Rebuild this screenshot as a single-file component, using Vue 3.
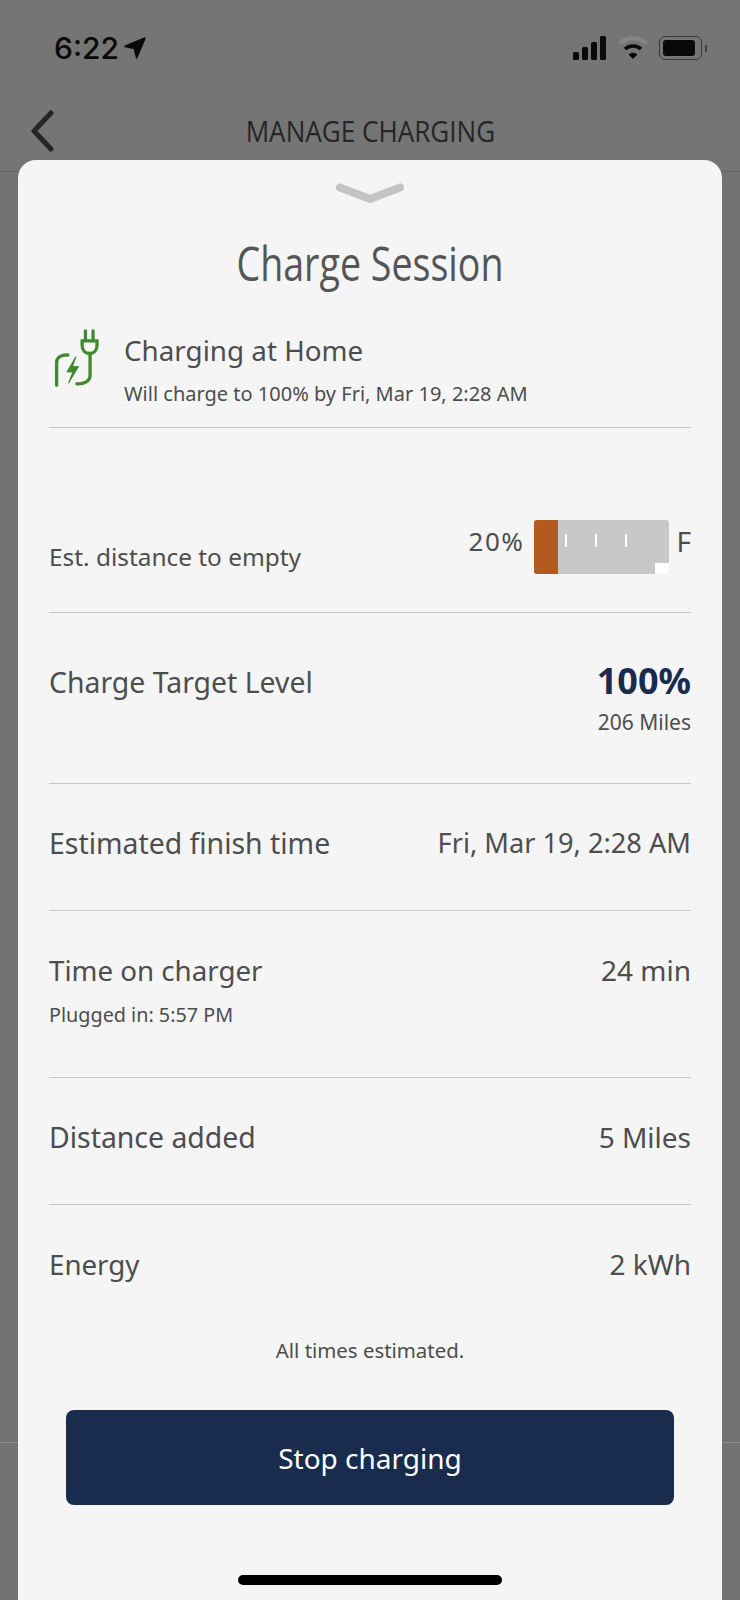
<template>
  <div class="screen">
    <div class="status-bar">
      <div class="clock">
        <span>6:22</span>
        <svg class="loc" viewBox="0 0 20 20"><path d="M19 1 1 8.500l8.500 2 2 8.500z" fill="#0a0a0a" stroke="#0a0a0a" stroke-width="1.500" stroke-linejoin="round" /></svg>
      </div>
      <div class="status-icons">
        <svg width="34" height="24" viewBox="0 0 34 24">
          <rect x="0" y="16" width="6" height="8" rx="1.5" />
          <rect x="9" y="11" width="6" height="13" rx="1.5" />
          <rect x="18" y="6" width="6" height="18" rx="1.5" />
          <rect x="27" y="0" width="6" height="24" rx="1.5" />
        </svg>
        <svg class="wifi" width="30" height="24" viewBox="0 0 30 24">
          <path d="M1.500 7.500c7.500-7 19.500-7 27 0" fill="none" stroke="#868686" stroke-width="4" />
          <path d="M7 13c4.500-4 11.500-4 16 0" fill="none" stroke="#0a0a0a" stroke-width="3.500" />
          <path d="M15 23l-4.500-4.500c2.500-2.200 6.500-2.200 9 0z" fill="#0a0a0a" />
        </svg>
        <div class="battery"><div class="battery-fill"></div></div>
        <div class="battery-tip"></div>
      </div>
    </div>

    <header class="nav">
      <svg class="back" width="26" height="42" viewBox="0 0 26 42">
        <path d="M22 3 5 21l17 18" fill="none" stroke="#262626" stroke-width="5" stroke-linecap="round" stroke-linejoin="round" />
      </svg>
      <h1>MANAGE CHARGING</h1>
    </header>

    <div class="under"></div>

    <section class="sheet">
      <svg class="handle" width="68" height="21" viewBox="0 0 68 21">
        <path d="M4 4.500 34 16 64 4.500" fill="none" stroke="#c4c4c4" stroke-width="8" stroke-linecap="round" stroke-linejoin="round" />
      </svg>
      <h2 class="title">Charge Session</h2>

      <div class="session">
        <svg class="plug" width="48" height="60" viewBox="70 20 145 180" fill="none" stroke="#3f8a2e" stroke-width="10">
          <path d="M168 28v28M191 28v28" stroke-width="10" stroke-linecap="round" />
          <path d="M158 58h45v14c0 15-10 24-22.500 24S158 87 158 72z" />
          <path d="M182 96v66c0 18-18 27-40 26" stroke-linecap="round" />
          <path d="M81 192v-70c0-14 14-22 34-21" stroke-linecap="round" />
          <path d="M139 106l-27 46h18l-13 34 30-50h-18z" fill="#3f8a2e" stroke-width="3" stroke-linejoin="round" />
        </svg>
        <div>
          <div class="session-name">Charging at Home</div>
          <div class="session-sub">Will charge to 100% by Fri, Mar 19, 2:28 AM</div>
        </div>
      </div>

      <div class="row row-level">
        <span class="label">Est. distance to empty</span>
        <div class="level">
          <span class="level-pct">20%</span>
          <div class="gauge">
            <div class="gauge-fill"></div>
            <i class="tick" v-for="x in ticks" :key="x" :style="{ left: x + 'px' }"></i>
            <div class="gauge-notch"></div>
          </div>
          <span class="level-full">F</span>
        </div>
      </div>

      <div class="row row-target">
        <span class="label">Charge Target Level</span>
        <div class="target">
          <strong>100%</strong>
          <small>206 Miles</small>
        </div>
      </div>

      <div class="row row-short">
        <span class="label">Estimated finish time</span>
        <span class="value value-date">Fri, Mar 19, 2:28 AM</span>
      </div>

      <div class="row row-time">
        <div>
          <div class="label label-tight">Time on charger</div>
          <div class="plugged">Plugged in: 5:57 PM</div>
        </div>
        <span class="value">24 min</span>
      </div>

      <div class="row row-short">
        <span class="label">Distance added</span>
        <span class="value">5 Miles</span>
      </div>

      <div class="row row-last">
        <span class="label label-tight">Energy</span>
        <span class="value">2 kWh</span>
      </div>

      <p class="note">All times estimated.</p>
      <button type="button" class="stop">Stop charging</button>
      <div class="home-bar"></div>
    </section>
  </div>
</template>

<script setup>
const ticks = [31, 61, 91]
</script>

<style>
html,
body {
  margin: 0;
  background: #727272;
}
</style>

<style scoped>
.screen {
  position: relative;
  width: 740px;
  height: 1600px;
  overflow: hidden;
  background: #727272;
  font-family: "Noto Sans", "Open Sans", sans-serif;
  color: #4d4d4d;
}

.status-bar {
  height: 96px;
  box-sizing: border-box;
  padding: 30px 33px 0 54px;
  display: flex;
  justify-content: space-between;
  align-items: flex-start;
  background: #757575;
}

.clock {
  display: flex;
  align-items: center;
  gap: 5px;
  font: 500 30px/36px Inter, sans-serif;
  color: #0a0a0a;
}

.loc {
  width: 22px;
  height: 22px;
}

.status-icons {
  display: flex;
  align-items: center;
  gap: 11px;
  height: 36px;
  fill: #0a0a0a;
}

.battery {
  width: 43px;
  height: 24px;
  box-sizing: border-box;
  margin-left: 0;
  padding: 3px;
  border: 1.500px solid #3a3a3a;
  border-radius: 6px;
}

.battery-fill {
  width: 32px;
  height: 100%;
  border-radius: 3px;
  background: #0a0a0a;
}

.battery-tip {
  width: 2px;
  height: 7px;
  margin-left: -8px;
  background: #444;
}

.nav {
  height: 76px;
  box-sizing: border-box;
  display: flex;
  align-items: center;
  justify-content: center;
  position: relative;
  background: #757575;
  border-bottom: 1px solid #666;
}

.back {
  position: absolute;
  left: 29px;
  top: 14px;
}

.nav h1 {
  margin: 0 0 6px;
  font: 500 30px/36px "Open Sans", sans-serif;
  color: #262626;
  transform: scaleX(0.87);
  white-space: nowrap;
}

.under {
  height: 1270px;
  border-bottom: 1px solid #8c8c8c;
}

.sheet {
  position: absolute;
  left: 18px;
  top: 160px;
  width: 704px;
  height: 1440px;
  box-sizing: border-box;
  padding: 23px 31px 0;
  background: #f5f5f5;
  border-radius: 18px 18px 0 0;
  display: flex;
  flex-direction: column;
}

.handle {
  align-self: center;
  flex: none;
}

.title {
  margin: 20px 0 0;
  height: 78px;
  text-align: center;
  font: 400 47px/78px "Open Sans", sans-serif;
  color: #555;
  transform: scaleX(0.8);
  white-space: nowrap;
}

.session {
  height: 126px;
  box-sizing: border-box;
  padding: 24px 0 0 4px;
  display: flex;
  align-items: flex-start;
  gap: 23px;
  border-bottom: 1.500px solid #c9c9c9;
}

.plug {
  margin-top: 2px;
  flex: none;
}

.session-name {
  font-size: 27.800px;
  line-height: 44px;
  margin-top: 2px;
}

.session-sub {
  font-size: 20px;
  line-height: 44px;
}

.row {
  display: flex;
  justify-content: space-between;
  box-sizing: border-box;
  border-bottom: 1.500px solid #c9c9c9;
}

.label,
.value {
  font-size: 28px;
  line-height: 40px;
  white-space: nowrap;
}

.label {
  font-size: 28.400px;
}

.label-tight {
  font-size: 27.700px;
}

.value-date {
  font-size: 27.200px;
}

.row-level {
  height: 185px;
  padding-top: 109px;
}

.row-level .label {
  font-size: 24.400px;
}

.level {
  margin-top: -17px;
  height: 54px;
  display: flex;
  align-items: flex-start;
  gap: 10px;
}

.level-pct {
  font-size: 26px;
  line-height: 43px;
  letter-spacing: 1.500px;
}

.level-full {
  font-size: 28px;
  line-height: 43px;
  margin-left: -3px;
}

.gauge {
  position: relative;
  width: 135px;
  height: 54px;
  border-radius: 3px;
  background: #c8c8c8;
  overflow: hidden;
}

.gauge-fill {
  width: 24px;
  height: 100%;
  background: #b55a1e;
}

.tick {
  position: absolute;
  top: 14px;
  width: 2px;
  height: 13px;
  background: #fff;
}

.gauge-notch {
  position: absolute;
  right: 0;
  bottom: 0;
  width: 14px;
  height: 11px;
  background: #fff;
}

.row-target {
  height: 171px;
  padding-top: 49px;
}

.target {
  text-align: right;
  margin-top: -3px;
}

.target strong {
  display: block;
  font-size: 36px;
  line-height: 44px;
  font-weight: 700;
  color: #1a2c4e;
}

.target small {
  display: block;
  margin-top: 1px;
  font-size: 21px;
  line-height: 36px;
}

.row-short {
  height: 127px;
  padding-top: 39px;
}

.row-time {
  height: 167px;
  padding-top: 39px;
}

.plugged {
  font-size: 19.800px;
  line-height: 36px;
  margin-top: 7px;
}

.row-last {
  border-bottom: 0;
  height: 105px;
  padding-top: 39px;
}

.note {
  margin: 20px 0 0;
  text-align: center;
  font-size: 20.400px;
  line-height: 40px;
}

.stop {
  flex: none;
  align-self: center;
  margin-top: 40px;
  padding-top: 2px;
  width: 608px;
  height: 95px;
  border: 0;
  border-radius: 8px;
  background: #1a2c4e;
  color: #fff;
  font: 400 28px/1 "Noto Sans", sans-serif;
}

.home-bar {
  align-self: center;
  margin-top: 70px;
  width: 264px;
  height: 10px;
  border-radius: 5px;
  background: #000;
}
</style>
